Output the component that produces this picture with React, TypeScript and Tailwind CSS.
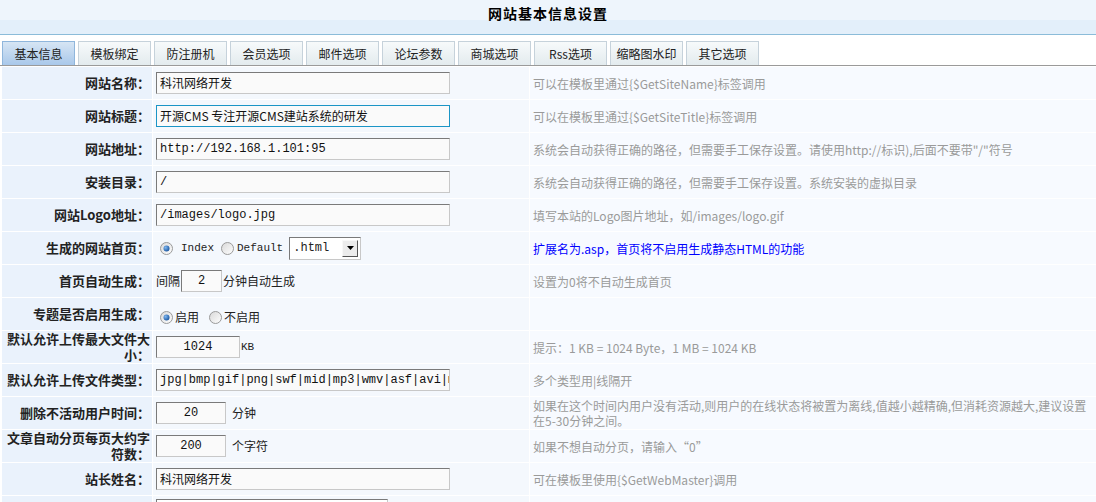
import React from "react";

const CJK = '"Noto Sans CJK SC", "Noto Sans", sans-serif';
const MONO = '"Liberation Mono", "Noto Sans CJK SC", monospace';

function Radio({ checked }: { checked?: boolean }) {
  return (
    <svg width="13" height="13" viewBox="0 0 13 13" className="shrink-0">
      <defs>
        <linearGradient id="rg" x1="0" y1="0" x2="1" y2="1">
          <stop offset="0" stopColor="#d8d8d8" />
          <stop offset="1" stopColor="#ffffff" />
        </linearGradient>
        <radialGradient id="dot" cx="0.35" cy="0.35" r="0.7">
          <stop offset="0" stopColor="#7fb7f0" />
          <stop offset="1" stopColor="#1a56a0" />
        </radialGradient>
      </defs>
      <circle cx="6.5" cy="6.5" r="6" fill="url(#rg)" stroke="#9a9a9a" />
      {checked && <circle cx="6.5" cy="6.5" r="3" fill="url(#dot)" />}
    </svg>
  );
}

function Input({
  value,
  w,
  center,
  focus,
  mono,
}: {
  value: string;
  w: number;
  center?: boolean;
  focus?: boolean;
  mono?: boolean;
}) {
  return (
    <div
      className={
        "h-[22px] shrink-0 flex items-center overflow-hidden whitespace-nowrap text-[12px] text-[#111] bg-[#fafafa] px-[3px] " +
        (focus
          ? "border border-[#1b95c6] bg-[#f4f8fd]"
          : "border border-t-[#7a7a7a] border-l-[#7a7a7a] border-b-[#c8c8c8] border-r-[#c8c8c8]") +
        (center ? " justify-center" : "")
      }
      style={{ width: w, fontFamily: mono ? MONO : CJK }}
    >
      {value}
    </div>
  );
}

type Row = {
  label: React.ReactNode;
  content: React.ReactNode;
  desc?: React.ReactNode;
  blue?: boolean;
};

const rows: Row[] = [
  {
    label: "网站名称：",
    content: <Input value="科汛网络开发" w={294} />,
    desc: "可以在模板里通过{$GetSiteName}标签调用",
  },
  {
    label: "网站标题：",
    content: <Input value="开源CMS 专注开源CMS建站系统的研发" w={294} focus />,
    desc: "可以在模板里通过{$GetSiteTitle}标签调用",
  },
  {
    label: "网站地址：",
    content: <Input value="http://192.168.1.101:95" w={294} mono />,
    desc: "系统会自动获得正确的路径，但需要手工保存设置。请使用http://标识),后面不要带\"/\"符号",
  },
  {
    label: "安装目录：",
    content: <Input value="/" w={294} mono />,
    desc: "系统会自动获得正确的路径，但需要手工保存设置。系统安装的虚拟目录",
  },
  {
    label: "网站Logo地址：",
    content: <Input value="/images/logo.jpg" w={294} mono />,
    desc: "填写本站的Logo图片地址，如/images/logo.gif",
  },
  {
    label: "生成的网站首页：",
    content: (
      <div className="flex items-center text-[11px] text-[#222]" style={{ fontFamily: MONO }}>
        <span className="ml-[4px]"><Radio checked /></span>
        <span className="ml-[8px]">Index</span>
        <span className="ml-[7px]"><Radio /></span>
        <span className="ml-[3px]">Default</span>
        <div className="ml-[6px] w-[72px] h-[23px] text-[12px] border border-t-[#7a7a7a] border-l-[#7a7a7a] border-b-[#c8c8c8] border-r-[#c8c8c8] bg-white flex items-center justify-between pl-[3px] pr-[2px]">
          <span>.html</span>
          <span className="w-[16px] h-[17px] bg-[#ececec] border border-t-[#f8f8f8] border-l-[#f8f8f8] border-b-[#555] border-r-[#555] flex items-center justify-center">
            <svg width="7" height="4" viewBox="0 0 7 4">
              <path d="M0 0 L7 0 L3.5 4 Z" fill="#000" />
            </svg>
          </span>
        </div>
      </div>
    ),
    desc: "扩展名为.asp，首页将不启用生成静态HTML的功能",
    blue: true,
  },
  {
    label: "首页自动生成：",
    content: (
      <div className="flex items-center text-[12px] text-[#222]" style={{ fontFamily: CJK }}>
        <span className="mr-[1px]">间隔</span>
        <Input value="2" w={41} center mono />
        <span className="ml-[1px]">分钟自动生成</span>
      </div>
    ),
    desc: "设置为0将不自动生成首页",
  },
  {
    label: "专题是否启用生成：",
    content: (
      <div className="flex items-center text-[12px] text-[#222] pt-[6px]" style={{ fontFamily: CJK }}>
        <span className="ml-[4px]"><Radio checked /></span>
        <span className="ml-[2px]">启用</span>
        <span className="ml-[10px]"><Radio /></span>
        <span className="ml-[2px]">不启用</span>
      </div>
    ),
  },
  {
    label: "默认允许上传最大文件大小：",
    content: (
      <div className="flex items-center text-[12px] text-[#222]" style={{ fontFamily: MONO }}>
        <Input value="1024" w={84} center mono />
        <span className="ml-[1px] text-[11px]">KB</span>
      </div>
    ),
    desc: "提示：1 KB = 1024 Byte，1 MB = 1024 KB",
  },
  {
    label: "默认允许上传文件类型：",
    content: <Input value="jpg|bmp|gif|png|swf|mid|mp3|wmv|asf|avi|mpg" w={294} mono />,
    desc: "多个类型用|线隔开",
  },
  {
    label: "删除不活动用户时间：",
    content: (
      <div className="flex items-center text-[12px] text-[#222]" style={{ fontFamily: CJK }}>
        <Input value="20" w={70} center mono />
        <span className="ml-[6px]">分钟</span>
      </div>
    ),
    desc: "如果在这个时间内用户没有活动,则用户的在线状态将被置为离线,值越小越精确,但消耗资源越大,建议设置在5-30分钟之间。",
  },
  {
    label: "文章自动分页每页大约字符数：",
    content: (
      <div className="flex items-center text-[12px] text-[#222]" style={{ fontFamily: CJK }}>
        <Input value="200" w={70} center mono />
        <span className="ml-[6px]">个字符</span>
      </div>
    ),
    desc: "如果不想自动分页，请输入“0”",
  },
  {
    label: "站长姓名：",
    content: <Input value="科汛网络开发" w={294} />,
    desc: "可在模板里使用{$GetWebMaster}调用",
  },
  {
    label: "",
    content: (
      <div className="self-start mt-[3px] w-[232px] h-[22px] border border-t-[#7a7a7a] border-l-[#7a7a7a] border-b-[#c8c8c8] border-r-[#c8c8c8] bg-white flex justify-end pr-[2px] pt-[2px]">
        <span className="w-[16px] h-[17px] bg-[#ececec] border border-[#aaa]" />
      </div>
    ),
    desc: "",
  },
];

const tabs = [
  "基本信息",
  "模板绑定",
  "防注册机",
  "会员选项",
  "邮件选项",
  "论坛参数",
  "商城选项",
  "Rss选项",
  "缩略图水印",
  "其它选项",
];

export default function App() {
  return (
    <div className="w-[1096px] h-[502px] overflow-hidden bg-white" style={{ fontFamily: CJK }}>
      {/* Header */}
      <div className="h-[35px] border-b border-[#8bbcd9] bg-[linear-gradient(to_bottom,#eef5fc_0px,#eef5fc_20px,#e3effa_20px,#e3effa_100%)] flex justify-center">
        <div className="pt-[4px] text-[14px] leading-[18px] font-bold text-black tracking-[1px]">
          网站基本信息设置
        </div>
      </div>
      {/* Tabs */}
      <div className="h-[31px] pt-[6px] pl-[2px] flex gap-[3px] border-b border-[#9a9a9a]">
        {tabs.map((t, i) => (
          <div
            key={t}
            className={
              "w-[73px] h-[24px] flex items-center justify-center text-[12px] text-[#222] border border-b-0 " +
              (i === 0
                ? "border-[#8fb6dc] bg-[linear-gradient(to_bottom,#d6e5f4,#a9c8ea)]"
                : "border-[#c6d2db] bg-[linear-gradient(to_bottom,#f7fafb,#e3ebee)]")
            }
          >
            {t}
          </div>
        ))}
      </div>
      {/* Rows */}
      <div className="pt-px pl-[2px] flex flex-col gap-px">
        {rows.map((r, i) => (
          <div key={i} className="flex gap-px h-[32px]">
            <div className="w-[150px] shrink-0 bg-[#eaf2fc] flex items-center justify-end text-right pl-[4px] pr-[2px] text-[13px] leading-[16px] font-bold text-[#222]">
              <span>{r.label}</span>
            </div>
            <div className="w-[376px] shrink-0 bg-[#f4f8fd] flex items-center pl-[3px]">
              {r.content}
            </div>
            <div
              className={
                "flex-1 bg-[#f7faff] flex items-center pl-[3px] pr-[6px] text-[12px] leading-[15px] " +
                (r.blue ? "text-[#0000ff]" : "text-[#9a9a9a]")
              }
            >
              {r.desc}
            </div>
          </div>
        ))}
      </div>
    </div>
  );
}
